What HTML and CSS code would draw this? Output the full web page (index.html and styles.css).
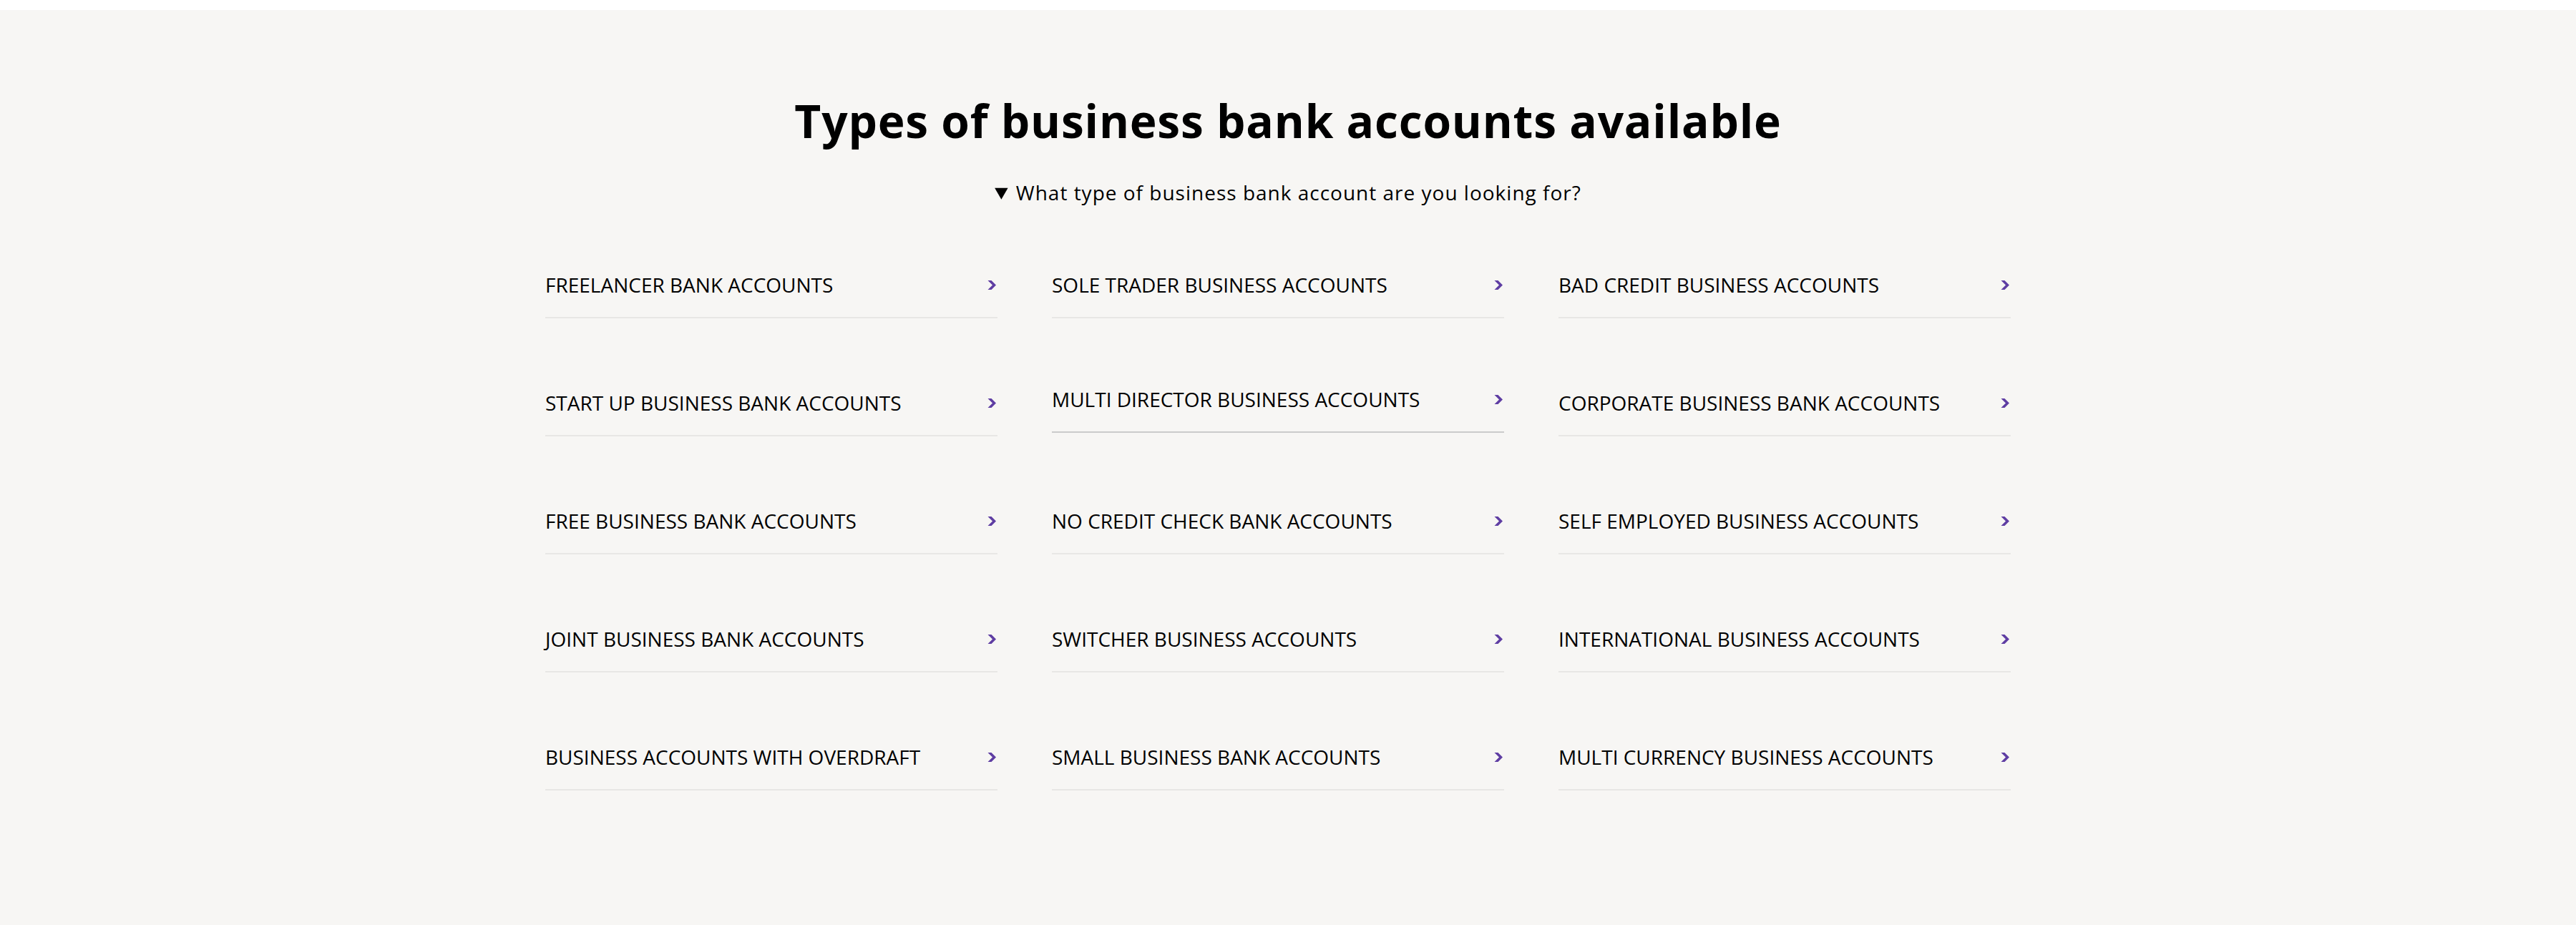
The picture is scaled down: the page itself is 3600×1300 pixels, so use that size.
FILE: index.html
```html
<!DOCTYPE html>
<html lang="en">
<head>
<meta charset="utf-8">
<title>Types of business bank accounts available</title>
<link rel="stylesheet" href="styles.css">
</head>
<body>
<div class="topbar"></div>
<section class="types">
  <h1 class="types-title">Types of business bank accounts available</h1>
  <details class="types-details" open>
    <summary class="types-summary">What type of business bank account are you looking for?</summary>
    <div class="types-wrap">
      <ul class="types-grid">
        <li><a class="type-link" href="#"><span>FREELANCER BANK ACCOUNTS</span><svg class="chev" viewBox="0 0 12 13"><path d="M0.5 0H5.5L12 6.5L5.5 13H0.5L7 6.5Z"/></svg></a></li>
        <li><a class="type-link" href="#"><span>SOLE TRADER BUSINESS ACCOUNTS</span><svg class="chev" viewBox="0 0 12 13"><path d="M0.5 0H5.5L12 6.5L5.5 13H0.5L7 6.5Z"/></svg></a></li>
        <li><a class="type-link" href="#"><span>BAD CREDIT BUSINESS ACCOUNTS</span><svg class="chev" viewBox="0 0 12 13"><path d="M0.5 0H5.5L12 6.5L5.5 13H0.5L7 6.5Z"/></svg></a></li>
        <li><a class="type-link" href="#"><span>START UP BUSINESS BANK ACCOUNTS</span><svg class="chev" viewBox="0 0 12 13"><path d="M0.5 0H5.5L12 6.5L5.5 13H0.5L7 6.5Z"/></svg></a></li>
        <li><a class="type-link is-hover" href="#"><span>MULTI DIRECTOR BUSINESS ACCOUNTS</span><svg class="chev" viewBox="0 0 12 13"><path d="M0.5 0H5.5L12 6.5L5.5 13H0.5L7 6.5Z"/></svg></a></li>
        <li><a class="type-link" href="#"><span>CORPORATE BUSINESS BANK ACCOUNTS</span><svg class="chev" viewBox="0 0 12 13"><path d="M0.5 0H5.5L12 6.5L5.5 13H0.5L7 6.5Z"/></svg></a></li>
        <li><a class="type-link" href="#"><span>FREE BUSINESS BANK ACCOUNTS</span><svg class="chev" viewBox="0 0 12 13"><path d="M0.5 0H5.5L12 6.5L5.5 13H0.5L7 6.5Z"/></svg></a></li>
        <li><a class="type-link" href="#"><span>NO CREDIT CHECK BANK ACCOUNTS</span><svg class="chev" viewBox="0 0 12 13"><path d="M0.5 0H5.5L12 6.5L5.5 13H0.5L7 6.5Z"/></svg></a></li>
        <li><a class="type-link" href="#"><span>SELF EMPLOYED BUSINESS ACCOUNTS</span><svg class="chev" viewBox="0 0 12 13"><path d="M0.5 0H5.5L12 6.5L5.5 13H0.5L7 6.5Z"/></svg></a></li>
        <li><a class="type-link" href="#"><span>JOINT BUSINESS BANK ACCOUNTS</span><svg class="chev" viewBox="0 0 12 13"><path d="M0.5 0H5.5L12 6.5L5.5 13H0.5L7 6.5Z"/></svg></a></li>
        <li><a class="type-link" href="#"><span>SWITCHER BUSINESS ACCOUNTS</span><svg class="chev" viewBox="0 0 12 13"><path d="M0.5 0H5.5L12 6.5L5.5 13H0.5L7 6.5Z"/></svg></a></li>
        <li><a class="type-link" href="#"><span>INTERNATIONAL BUSINESS ACCOUNTS</span><svg class="chev" viewBox="0 0 12 13"><path d="M0.5 0H5.5L12 6.5L5.5 13H0.5L7 6.5Z"/></svg></a></li>
        <li><a class="type-link" href="#"><span>BUSINESS ACCOUNTS WITH OVERDRAFT</span><svg class="chev" viewBox="0 0 12 13"><path d="M0.5 0H5.5L12 6.5L5.5 13H0.5L7 6.5Z"/></svg></a></li>
        <li><a class="type-link" href="#"><span>SMALL BUSINESS BANK ACCOUNTS</span><svg class="chev" viewBox="0 0 12 13"><path d="M0.5 0H5.5L12 6.5L5.5 13H0.5L7 6.5Z"/></svg></a></li>
        <li><a class="type-link" href="#"><span>MULTI CURRENCY BUSINESS ACCOUNTS</span><svg class="chev" viewBox="0 0 12 13"><path d="M0.5 0H5.5L12 6.5L5.5 13H0.5L7 6.5Z"/></svg></a></li>
      </ul>
    </div>
  </details>
</section>
</body>
</html>
```
FILE: styles.css
```css
html, body {
  margin: 0;
  padding: 0;
  background: #ffffff;
}
body {
  font-family: "Open Sans", "Liberation Sans", sans-serif;
  color: #000;
}
.topbar {
  height: 14px;
  background: #ffffff;
}
.types {
  background: #f7f6f4;
  padding: 117px 0 188px;
}
.types-title {
  margin: 0;
  text-align: center;
  font-size: 64px;
  line-height: 76px;
  font-weight: 700;
  letter-spacing: 0.8px;
}
.types-details {
  margin-top: 42px;
}
.types-summary {
  text-align: center;
  font-size: 28px;
  line-height: 40px;
  letter-spacing: 1px;
  cursor: pointer;
}
.types-wrap {
  width: 2076px;
  margin: 67px auto 0;
  padding-right: 28px;
  box-sizing: border-box;
}
.types-grid {
  list-style: none;
  margin: 0;
  padding: 0;
  display: grid;
  grid-template-columns: repeat(3, 632px);
  column-gap: 76px;
  row-gap: 76px;
}
.type-link {
  display: flex;
  align-items: center;
  justify-content: space-between;
  padding: 22px 2px 25px 0;
  border-bottom: 2px solid #e8e7e5;
  color: #000;
  text-decoration: none;
  font-size: 28px;
  line-height: 40px;
}
.type-link.is-hover {
  transform: translateY(-5px);
  border-bottom-color: #cbcbcb;
}
.chev {
  width: 12px;
  height: 13px;
  fill: #5f3ea3;
  flex: none;
}
```
